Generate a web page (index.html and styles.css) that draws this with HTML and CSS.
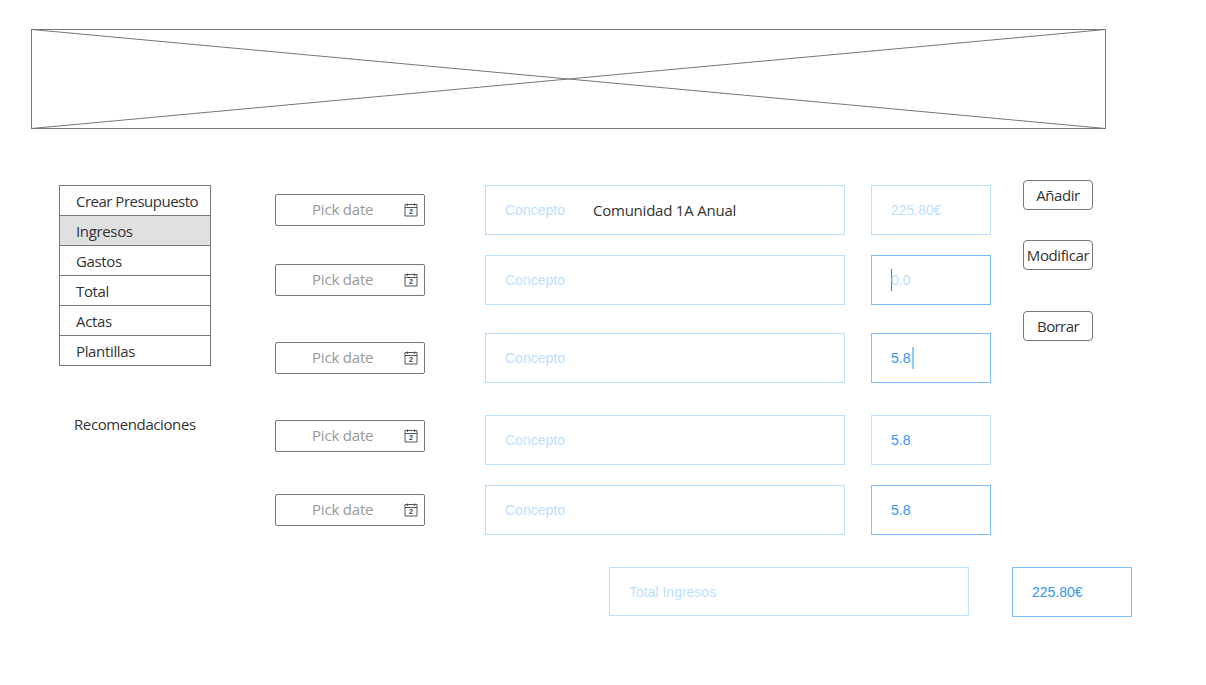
FILE: index.html
```
<!DOCTYPE html>
<html lang="es">
<head>
<meta charset="utf-8">
<title>Ingresos</title>
<link rel="stylesheet" href="styles.css">
</head>
<body>
<header class="banner">
  <svg class="cross" viewBox="0 0 1075 100"><rect x=".5" y=".5" width="1074" height="99"/><path d="M.5 .5L1074.500 99.500M.5 99.500L1074.500 .5"/></svg>
</header>
<main class="main">
  <nav class="side">
    <ul class="menu">
      <li class="long">Crear Presupuesto</li>
      <li class="active">Ingresos</li>
      <li>Gastos</li>
      <li>Total</li>
      <li>Actas</li>
      <li>Plantillas</li>
    </ul>
    <div class="reco">Recomendaciones</div>
  </nav>
  <section class="rows">
    <div class="row">
      <div class="date"><span>Pick date</span><svg class="cal" viewBox="0 0 14 14"><path d="M1 1.500h12v11.500H1zM1 4.500h12M3.500 .5v2.500M10.500 .5v2.500"/><text x="7" y="11.200">2</text></svg></div>
      <div class="field concept">Concepto<span class="value">Comunidad 1A Anual</span></div>
      <div class="field amount">225.80€</div>
    </div>
    <div class="row r2">
      <div class="date"><span>Pick date</span><svg class="cal" viewBox="0 0 14 14"><path d="M1 1.500h12v11.500H1zM1 4.500h12M3.500 .5v2.500M10.500 .5v2.500"/><text x="7" y="11.200">2</text></svg></div>
      <div class="field concept">Concepto</div>
      <div class="field amount focus"><i class="caret"></i>0.0</div>
    </div>
    <div class="row r3">
      <div class="date"><span>Pick date</span><svg class="cal" viewBox="0 0 14 14"><path d="M1 1.500h12v11.500H1zM1 4.500h12M3.500 .5v2.500M10.500 .5v2.500"/><text x="7" y="11.200">2</text></svg></div>
      <div class="field concept">Concepto</div>
      <div class="field amount focus filled">5.8<i class="caret wide"></i></div>
    </div>
    <div class="row r4">
      <div class="date"><span>Pick date</span><svg class="cal" viewBox="0 0 14 14"><path d="M1 1.500h12v11.500H1zM1 4.500h12M3.500 .5v2.500M10.500 .5v2.500"/><text x="7" y="11.200">2</text></svg></div>
      <div class="field concept">Concepto</div>
      <div class="field amount filled">5.8</div>
    </div>
    <div class="row r5">
      <div class="date"><span>Pick date</span><svg class="cal" viewBox="0 0 14 14"><path d="M1 1.500h12v11.500H1zM1 4.500h12M3.500 .5v2.500M10.500 .5v2.500"/><text x="7" y="11.200">2</text></svg></div>
      <div class="field concept">Concepto</div>
      <div class="field amount focus filled">5.8</div>
    </div>
  </section>
  <aside class="actions">
    <button class="btn">Añadir</button>
    <button class="btn modify">Modificar</button>
    <button class="btn delete">Borrar</button>
  </aside>
</main>
<footer class="total">
  <div class="field concept short">Total Ingresos</div>
  <div class="field amount focus filled">225.80€</div>
</footer>
</body>
</html>
```
FILE: styles.css
```
* { box-sizing: border-box; }
body {
  margin: 0;
  padding: 29px 0 0;
  background: #fff;
  color: #333;
  font: 15px/20px "Open Sans", "Noto Sans", sans-serif;
  letter-spacing: -0.4px;
}
.banner { margin-left: 31px; width: 1075px; height: 100px; }
.cross { display: block; width: 1075px; height: 100px; fill: none; stroke: #777; stroke-width: 1; }
.main { display: flex; align-items: flex-start; margin: 51px 0 0 59px; }
.side { width: 152px; margin: 5px 64px 0 0; }
.menu { list-style: none; margin: 0; padding: 0; border: 1px solid #777; letter-spacing: -0.35px; }
.menu li { height: 30px; padding: 5px 0 0 16px; line-height: 20px; white-space: nowrap; border-bottom: 1px solid #777; }
.menu li:last-child { height: 29px; border-bottom: 0; }
.menu .long { letter-spacing: -0.5px; }
.menu .active { background: #e0e0e0; }
.reco { margin: 48px 0 0 15px; }
.rows { width: 716px; padding-top: 5px; }
.row { display: flex; align-items: center; height: 50px; }
.r2, .r5 { margin-top: 20px; }
.r3 { margin-top: 28px; }
.r4 { margin-top: 32px; }
.date {
  display: flex; align-items: center; justify-content: space-between;
  width: 150px; height: 32px; margin-right: 60px; padding: 0 6px 0 36px;
  border: 1px solid #777; border-radius: 2px; color: #999; letter-spacing: -0.2px;
}
.date span { padding-bottom: 2px; }
.r4 .date { margin-bottom: 8px; }
.cal { width: 14px; height: 14px; }
.cal path { fill: none; stroke: #555; stroke-width: 1; }
.cal text { fill: #444; font: bold 7px "Liberation Sans", sans-serif; letter-spacing: 0; text-anchor: middle; }
.field {
  display: flex; align-items: center; height: 50px; padding-left: 19px;
  border: 1px solid #bbdfff; color: #bbdfff;
  font: 14px/20px "Liberation Sans", Arial, sans-serif; letter-spacing: 0;
}
.concept { width: 360px; }
.value { margin-left: 28px; color: #333; font: 15px/20px "Open Sans", "Noto Sans", sans-serif; letter-spacing: -0.22px; }
.amount { width: 120px; }
.row .amount { margin-left: 26px; }
.focus { border-color: #7cc0fb; }
.filled { color: #3294f5; }
.caret { width: 1px; height: 22px; margin-right: -1px; background: #2b8be0; }
.wide { width: 2px; margin-left: 2px; background: #8cc8fa; }
.actions { display: flex; flex-direction: column; width: 70px; margin-left: 32px; }
.btn {
  width: 70px; height: 30px; padding: 0 0 1px; white-space: nowrap;
  border: 1px solid #777; border-radius: 4px; background: #fff; color: #333;
  font: inherit; letter-spacing: inherit;
}
.modify { margin-top: 30px; }
.delete { margin-top: 41px; letter-spacing: -0.6px; }
.total { display: flex; align-items: flex-start; gap: 43px; margin: 32px 0 0 609px; }
.short { height: 49px; }
```
